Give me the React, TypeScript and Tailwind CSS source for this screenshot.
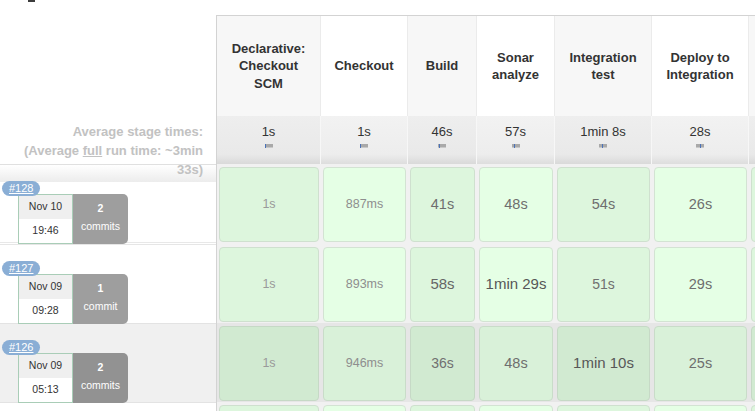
import React from "react";

type Col = {
  w: string;
  lines: string[];
  gray: boolean;
  avg: string;
  blue: number;
};

const cols: Col[] = [
  { w: "w-[104px]", lines: ["Declarative:", "Checkout", "SCM"], gray: true, avg: "1s", blue: 0 },
  { w: "w-[87px]", lines: ["Checkout"], gray: false, avg: "1s", blue: 0 },
  { w: "w-[69px]", lines: ["Build"], gray: true, avg: "46s", blue: 1 },
  { w: "w-[78px]", lines: ["Sonar", "analyze"], gray: false, avg: "57s", blue: 2 },
  { w: "w-[97px]", lines: ["Integration", "test"], gray: true, avg: "1min 8s", blue: 3 },
  { w: "w-[97px]", lines: ["Deploy to", "Integration"], gray: false, avg: "28s", blue: 4 },
  { w: "w-[110px]", lines: [], gray: true, avg: "", blue: 0 },
];

type Cell = { t: string; cls: string };

type Run = {
  id: string;
  date: string;
  time: string;
  n: string;
  label: string;
  dark: boolean;
  cells: Cell[];
};

const small = "text-[12.5px] text-[#8e8e8e]";
const one = "text-[12.5px] text-[#9a9a9a]";
const mid = "text-[14.5px] text-[#6e6e6e]";
const mid14 = "text-[14px] text-[#707070]";
const big = "text-[15px] text-[#575757]";

const runs: Run[] = [
  {
    id: "#128",
    date: "Nov 10",
    time: "19:46",
    n: "2",
    label: "commits",
    dark: false,
    cells: [
      { t: "1s", cls: one },
      { t: "887ms", cls: small },
      { t: "41s", cls: mid },
      { t: "48s", cls: mid },
      { t: "54s", cls: mid },
      { t: "26s", cls: mid },
      { t: "", cls: mid },
    ],
  },
  {
    id: "#127",
    date: "Nov 09",
    time: "09:28",
    n: "1",
    label: "commit",
    dark: false,
    cells: [
      { t: "1s", cls: one },
      { t: "893ms", cls: small },
      { t: "58s", cls: "text-[15px] text-[#666666]" },
      { t: "1min 29s", cls: big },
      { t: "51s", cls: mid14 },
      { t: "29s", cls: mid },
      { t: "", cls: mid },
    ],
  },
  {
    id: "#126",
    date: "Nov 09",
    time: "05:13",
    n: "2",
    label: "commits",
    dark: true,
    cells: [
      { t: "1s", cls: one },
      { t: "946ms", cls: small },
      { t: "36s", cls: mid14 },
      { t: "48s", cls: mid },
      { t: "1min 10s", cls: big },
      { t: "25s", cls: mid },
      { t: "", cls: mid },
    ],
  },
];

function AvgBar({ blue }: { blue: number }) {
  return (
    <svg width="8" height="4" viewBox="0 0 8 4" className="block">
      <rect x="0" y="0" width="8" height="3" fill="#a9a9a9" />
      <rect x="0" y="3" width="8" height="1" fill="#c9c9c9" />
      <rect x={blue} y="0" width="1" height="4" fill="#4a72b8" />
    </svg>
  );
}

function cellColor(gray: boolean, dark: boolean) {
  if (dark) {
    return gray
      ? "bg-[#d1ead1] border-[#c6d9c6]"
      : "bg-[#d9f1d9] border-[#c9dcc9]";
  }
  return gray
    ? "bg-[#ddf6dd] border-[#cfe0cf]"
    : "bg-[#e5ffe5] border-[#d3e3d3]";
}

function LeftRow({ r, first }: { r: Run; first: boolean }) {
  const rowCls = first
    ? "h-[80px] border-t border-[#e0e0e0] bg-[linear-gradient(to_bottom,#ffffff_0px,#ececec_17px,#ffffff_17px,#ffffff_77px,#e8e8e8_77px,#e8e8e8_78px,#ffffff_78px)]"
    : r.dark
    ? "h-[79px] border-t border-[#e3e3e3] bg-[#f0f0f0]"
    : "h-[79px] border-t border-[#e6e6e6] bg-white";
  const commitsBg = r.dark ? "bg-[#929292]" : "bg-[#9e9e9e]";
  return (
    <div className={rowCls}>
      <div className="pt-[10px] pl-[2px]">
        <span className="relative z-10 inline-block h-[15px] rounded-full bg-[#8aaed5] px-[7px] text-[11px] leading-[15px] text-white underline">
          {r.id}
        </span>
        <div className="-mt-[5px] ml-[16px] flex h-[50px]">
          <div className="flex w-[55px] flex-col border border-[#a9cdb7]">
            <div className="flex h-[24px] items-center justify-center bg-[#efefef] text-[10.5px] text-[#333333]">
              {r.date}
            </div>
            <div className="flex flex-1 items-center justify-center bg-white text-[10.5px] text-[#333333]">
              {r.time}
            </div>
          </div>
          <div
            className={`flex w-[55px] flex-col items-center rounded-r-[5px] pt-[5px] text-[10.5px] text-white ${commitsBg}`}
          >
            <div className="font-bold leading-[18px]">{r.n}</div>
            <div className="leading-[18px]">{r.label}</div>
          </div>
        </div>
      </div>
    </div>
  );
}

function DataRow({ r, first }: { r: Run; first: boolean }) {
  const rowCls = first
    ? "flex h-[80px] bg-[#f1f1f1]"
    : r.dark
    ? "flex h-[79px] bg-[#e6e6e6]"
    : "flex h-[79px] bg-[#f1f1f1]";
  return (
    <div className={rowCls}>
      {cols.map((c, i) => (
        <div key={i} className={`${c.w} shrink-0 px-[2px] pt-[3px]`}>
          <div
            className={`flex h-[75px] items-center justify-center rounded-[4px] border ${cellColor(
              c.gray,
              r.dark
            )}`}
          >
            <span className={`whitespace-nowrap ${r.cells[i].cls}`}>{r.cells[i].t}</span>
          </div>
        </div>
      ))}
    </div>
  );
}

export default function App() {
  return (
    <div className="h-[411px] w-[755px] overflow-hidden bg-white font-['Liberation_Sans',Arial,sans-serif]">
      <div className="h-[15px]">
        <div className="ml-[28px] h-[2px] w-[7px] bg-[#3c3c3c]" />
      </div>
      <div className="flex">
        <div className="w-[216px] shrink-0">
          <div className="h-[101px]" />
          <div className="relative z-10 h-[48px] whitespace-nowrap pr-[13px] pt-[6px] text-right text-[13px] font-bold leading-[19px] text-[#c2c2c2]">
            Average stage times:
            <br />
            (Average <span className="underline">full</span> run time: ~3min
            <br />
            33s)
          </div>
          {runs.map((r, i) => (
            <LeftRow key={r.id} r={r} first={i === 0} />
          ))}
          <div className="h-[40px] border-t border-[#e3e3e3]" />
        </div>
        <div className="min-w-0 flex-1 border-l border-t border-[#d3d3d3]">
          <div className="flex h-[100px]">
            {cols.map((c, i) => (
              <div
                key={i}
                className={`${c.w} flex shrink-0 flex-col items-center justify-center border-r border-[#ebebeb] px-[6px] text-center text-[13px] font-bold leading-[17.5px] text-[#333333] ${
                  c.gray ? "bg-[#f7f7f7]" : "bg-white"
                }`}
              >
                {c.lines.map((l) => (
                  <div key={l} className="whitespace-nowrap">
                    {l}
                  </div>
                ))}
              </div>
            ))}
          </div>
          <div className="flex h-[48px]">
            {cols.map((c, i) => (
              <div
                key={i}
                className={`${c.w} flex shrink-0 flex-col items-center border-r border-[#f7f7f7] pt-[8px] ${
                  c.gray
                    ? "bg-[linear-gradient(to_bottom,#eeeeee_0%,#e9e9e9_80%,#d9d9d9_100%)]"
                    : "bg-[linear-gradient(to_bottom,#f2f2f2_0%,#ededed_80%,#dddddd_100%)]"
                }`}
              >
                {c.avg && (
                  <>
                    <div className="whitespace-nowrap text-[13px] leading-[16px] text-[#333333]">
                      {c.avg}
                    </div>
                    <div className="mt-[4px]">
                      <AvgBar blue={c.blue} />
                    </div>
                  </>
                )}
              </div>
            ))}
          </div>
          {runs.map((r, i) => (
            <DataRow key={r.id} r={r} first={i === 0} />
          ))}
          <div className="flex h-[40px] bg-[#f1f1f1]">
            {cols.map((c, i) => (
              <div key={i} className={`${c.w} shrink-0 px-[2px] pt-[3px]`}>
                <div
                  className={`h-[75px] rounded-[4px] border ${cellColor(c.gray, false)}`}
                />
              </div>
            ))}
          </div>
        </div>
      </div>
    </div>
  );
}
